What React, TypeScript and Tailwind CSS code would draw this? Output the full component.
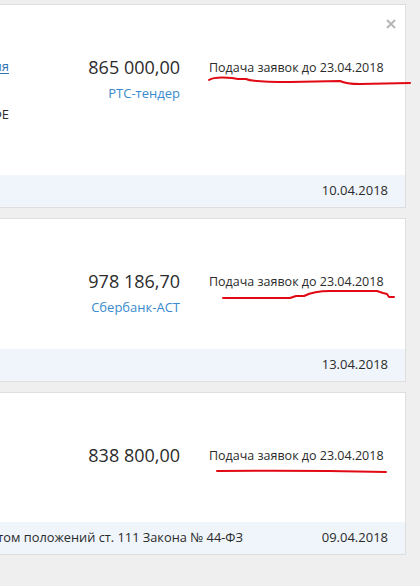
import React from "react";

type Tender = {
  amount: string;
  platform?: string;
  deadline: string;
  published: string;
  bodyHeight: string;
  closable?: boolean;
  left?: React.ReactNode;
  note?: string;
};

const tenders: Tender[] = [
  {
    amount: "865 000,00",
    platform: "РТС-тендер",
    deadline: "Подача заявок до 23.04.2018",
    published: "10.04.2018",
    bodyHeight: "h-[170px]",
    closable: true,
    left: (
      <div className="flex flex-col">
        <div className="flex h-[24px] items-center justify-end whitespace-nowrap">
          <a href="#" className="text-[#2d74b5] underline underline-offset-2">
            Организация
          </a>
        </div>
        <div className="mt-[24px] flex h-[24px] items-center justify-end whitespace-nowrap">
          <span>КАФЕ</span>
        </div>
      </div>
    ),
  },
  {
    amount: "978 186,70",
    platform: "Сбербанк-АСТ",
    deadline: "Подача заявок до 23.04.2018",
    published: "13.04.2018",
    bodyHeight: "h-[130px]",
  },
  {
    amount: "838 800,00",
    deadline: "Подача заявок до 23.04.2018",
    published: "09.04.2018",
    bodyHeight: "h-[129px]",
    note: "Закупка осуществляется с учетом положений ст. 111 Закона № 44-ФЗ",
  },
];

function CloseIcon() {
  return (
    <svg width="10" height="10" viewBox="0 0 10 10" className="text-[#b4b4b4]">
      <path d="M1 1 L9 9 M9 1 L1 9" stroke="currentColor" strokeWidth="1.8" />
    </svg>
  );
}

function TenderCard({ t }: { t: Tender }) {
  return (
    <div className="relative w-[406px] border-y border-r border-[#dedede] bg-white">
      {t.closable && (
        <button className="absolute right-[9px] top-[14px] p-0">
          <CloseIcon />
        </button>
      )}
      <div className={`flex pt-[50px] text-[13px] text-[#2b2b2b] ${t.bodyHeight}`}>
        <div className="w-[9px] shrink-0">{t.left}</div>
        <div className="flex w-[171px] shrink-0 flex-col items-end">
          <div className="h-[24px] text-[18px] leading-[24px]">{t.amount}</div>
          {t.platform && (
            <div className="mt-[5px] text-[13px] leading-[18px] text-[#3a8bcd]">{t.platform}</div>
          )}
        </div>
        <div className="ml-[29px] h-[24px] whitespace-nowrap text-[12.5px] leading-[26px]">
          {t.deadline}
        </div>
      </div>
      <div className="flex h-[32px] items-center bg-[#eff5fb] pr-[17px] text-[13px] text-[#2b2b2b]">
        <div className="flex w-[243px] justify-end whitespace-nowrap text-[12.8px]">
          {t.note && <span>{t.note}</span>}
        </div>
        <div className="ml-auto">{t.published}</div>
      </div>
    </div>
  );
}

export default function App() {
  return (
    <div
      className="relative h-[586px] w-[420px] overflow-hidden bg-[#efefef] pt-[4px]"
      style={{ fontFamily: '"Open Sans", "Noto Sans", sans-serif' }}
    >
      <div className="flex flex-col gap-[10px]">
        {tenders.map((t, i) => (
          <TenderCard key={i} t={t} />
        ))}
      </div>
      <svg
        className="pointer-events-none absolute left-0 top-0"
        width="420"
        height="586"
        viewBox="0 0 420 586"
        fill="none"
      >
        <g stroke="#e10a14" strokeWidth="2" strokeLinecap="round" strokeLinejoin="round">
          <path d="M209 80 C 212 78, 220 77, 232 78 L 238 79 L 246 79 C 250 81, 260 82, 290 82 L 340 81 C 344 83, 350 84, 360 84 L 410 83" />
          <path d="M223 298 L 290 298 L 296 296 L 304 296 C 310 293, 318 291, 330 291 L 377 291 L 383 293 L 387 294 L 389 297 L 394 297" />
          <path d="M217 471 Q 300 470 386 472" />
        </g>
      </svg>
    </div>
  );
}
